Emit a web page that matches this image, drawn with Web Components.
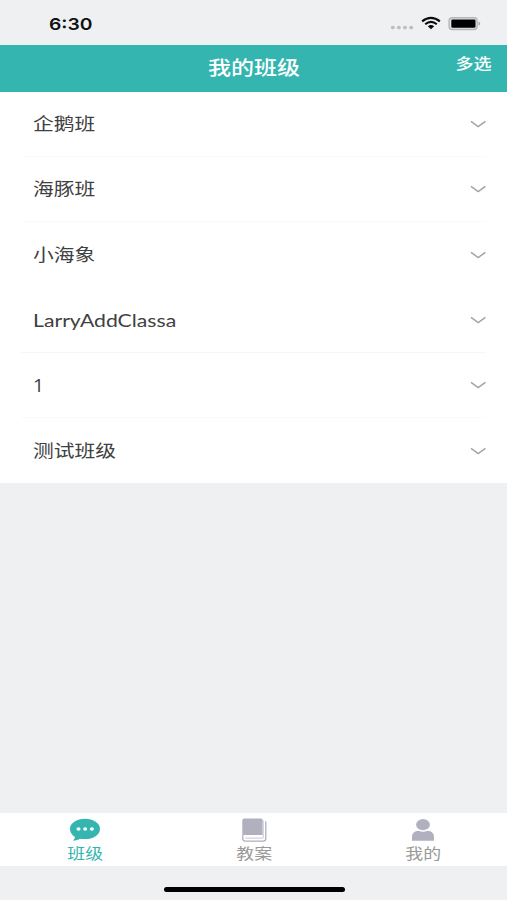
<!DOCTYPE html>
<html lang="zh-CN">
<head>
<meta charset="utf-8">
<title>我的班级</title>
<style>
  body {
    margin: 0;
    background: #eff0f2;
    font-family: Lato, "Noto Sans CJK SC", sans-serif;
  }
</style>
</head>
<body>
<class-app></class-app>
<script>
// Text drawn wider than its font, scaled from the side given by --origin
class WideText extends HTMLElement {
  constructor() {
    super();
    this.attachShadow({ mode: 'open' });
  }

  connectedCallback() {
    this.shadowRoot.innerHTML = `
      <style>
        :host {
          display: block;
          white-space: nowrap;
          transform: scaleX(var(--stretch, 1.18));
          transform-origin: var(--origin, center);
        }
      </style>
      <slot></slot>
    `;
  }
}
customElements.define('wide-text', WideText);

class StatusBar extends HTMLElement {
  constructor() {
    super();
    this.attachShadow({ mode: 'open' });
  }

  connectedCallback() {
    this.shadowRoot.innerHTML = `
      <style>
        :host {
          display: flex;
          justify-content: space-between;
          box-sizing: border-box;
          height: 44.6px;
          padding: 0 26px 0 49px;
          background: #eff0f2;
        }
        wide-text {
          --origin: left;
          --stretch: 1.17;
          margin-top: 12px;
          font: 600 16.5px/24px Inter, sans-serif;
          color: #111;
        }
        svg {
          display: block;
          margin-top: 14px;
        }
      </style>
      <wide-text>6:30</wide-text>
      <svg width="92" height="20" viewBox="0 0 92 20">
        <g fill="#bdbec0">
          <ellipse cx="3.8" cy="13.6" rx="2" ry="1.8"/>
          <ellipse cx="9.9" cy="13.6" rx="2" ry="1.8"/>
          <ellipse cx="16" cy="13.6" rx="2" ry="1.8"/>
          <ellipse cx="22.2" cy="13.6" rx="2" ry="1.8"/>
        </g>
        <g fill="none" stroke="#0c0c0c" stroke-width="2.1">
          <path d="M33.1 7.3Q42 .3 50.9 7.3"/>
          <path d="M36.200 10.200Q42 5.500 47.800 10.200"/>
        </g>
        <path d="M38.800 12.200Q42 9.800 45.200 12.200L42 15.200Z" fill="#0c0c0c"/>
        <rect x="60.1" y="3.700" width="28" height="11.800" rx="3" fill="#e4e5e7" stroke="#b5b6b8" stroke-width="1.400"/>
        <rect x="62.300" y="5.500" width="24.200" height="8.300" rx="1.200" fill="#000"/>
        <path d="M89.500 7.600Q93 9.600 89.500 11.700Z" fill="#a5a6a8"/>
      </svg>
    `;
  }
}
customElements.define('status-bar', StatusBar);

class NavHeader extends HTMLElement {
  constructor() {
    super();
    this.attachShadow({ mode: 'open' });
  }

  connectedCallback() {
    this.shadowRoot.innerHTML = `
      <style>
        :host {
          display: grid;
          grid-template-columns: 1fr auto 1fr;
          height: 47px;
          background: #34b5af;
          color: #fff;
        }
        .title {
          grid-column: 2;
          margin: 9px -1px 0 1px;
          font-size: 19.5px;
          font-weight: 500;
          line-height: 28px;
        }
        .action {
          --origin: right;
          justify-self: end;
          margin: 6.4px 15px 0 0;
          font-size: 15.3px;
          font-weight: 500;
          line-height: 24px;
        }
      </style>
      <wide-text class="title"><slot></slot></wide-text>
      <wide-text class="action"><slot name="action"></slot></wide-text>
    `;
  }
}
customElements.define('nav-header', NavHeader);

class ClassRow extends HTMLElement {
  constructor() {
    super();
    this.attachShadow({ mode: 'open' });
  }

  connectedCallback() {
    this.shadowRoot.innerHTML = `
      <style>
        :host {
          display: block;
          flex: 1;
          padding: 0 21px;
          color: #404040;
        }
        .row {
          display: flex;
          align-items: center;
          justify-content: space-between;
          box-sizing: border-box;
          height: 100%;
          padding: 1px 0 0 12px;
          border-bottom: 1px solid var(--line, #fafafa);
        }
        wide-text {
          --origin: left;
          font-size: 17.6px;
          line-height: 26px;
        }
        :host([latin]) wide-text {
          --stretch: 1.205;
          padding-top: 1px;
        }
        :host([digit]) wide-text {
          --stretch: 1.1;
          font-family: "Open Sans", sans-serif;
        }
      </style>
      <div class="row">
        <wide-text><slot></slot></wide-text>
        <svg width="16" height="10" viewBox="0 0 16 10">
          <path d="M1 2.300L8.200 7.600L15.400 2.300" fill="none" stroke="#a3a3a3" stroke-width="1.500"/>
        </svg>
      </div>
    `;
  }
}
customElements.define('class-row', ClassRow);

const tabIcons = {
  chat: `
    <path d="M16 .8C7.600 .8 1 5.200 1 10.900c0 3.400 2 6.200 5 8C5.800 20.500 5 21.600 3.600 22.500c3 .1 5.600-.5 7.300-1.800 1.600.3 3.300.4 5.100.4 8.400 0 15-4.500 15-10.200S24.400.8 16 .8z" fill="currentColor"/>
    <g fill="#fff"><ellipse cx="9.500" cy="11" rx="2" ry="1.700"/><ellipse cx="16.200" cy="11" rx="2" ry="1.700"/><ellipse cx="22.900" cy="11" rx="2" ry="1.700"/></g>`,
  book: `
    <path d="M6.200 .5H23Q24.700 .5 24.700 2.100V17H6.700Q4.300 17 4.300 19.200V2.500Q4.300 .5 6.200 .5z" fill="currentColor"/>
    <path d="M4.800 17.500V20.800Q4.800 23.100 7.300 23.100H25Q27.800 23.100 27.800 20.800V3.300" fill="none" stroke="currentColor" stroke-width="1.300"/>
    <path d="M7.300 20.200H24Q25.300 20.200 25.300 18.900V2.500" fill="none" stroke="#d2d2db" stroke-width="1.200"/>`,
  person: `
    <ellipse cx="16" cy="6.600" rx="6.900" ry="5.600" fill="currentColor"/>
    <path d="M5 22.700V18.800C5 15.200 8 13 11.500 12.800Q16 14.500 20.500 12.800C24.200 13 27 15.200 27 18.800V22.700z" fill="currentColor"/>`
};

class TabItem extends HTMLElement {
  constructor() {
    super();
    this.attachShadow({ mode: 'open' });
  }

  connectedCallback() {
    this.shadowRoot.innerHTML = `
      <style>
        :host {
          display: flex;
          flex: 1;
          flex-direction: column;
          align-items: center;
          padding-top: 5px;
          color: #b0b0bf;
        }
        :host([active]) {
          color: #34b5af;
        }
        svg {
          display: block;
        }
        wide-text {
          padding-left: 1px;
          font-size: 15.2px;
          line-height: 23px;
          color: #999;
        }
        :host([active]) wide-text {
          color: inherit;
        }
      </style>
      <svg width="32" height="24" viewBox="0 0 32 24">${tabIcons[this.getAttribute('icon')]}</svg>
      <wide-text><slot></slot></wide-text>
    `;
  }
}
customElements.define('tab-item', TabItem);

class ClassApp extends HTMLElement {
  constructor() {
    super();
    this.attachShadow({ mode: 'open' });
  }

  connectedCallback() {
    this.shadowRoot.innerHTML = `
      <style>
        :host {
          display: flex;
          flex-direction: column;
          height: 900px;
          overflow: hidden;
        }
        .list {
          display: flex;
          flex-direction: column;
          height: 391.6px;
          background: #fff;
        }
        .list :nth-child(3),
        .list :last-child {
          --line: #fff;
        }
        .list :nth-child(4) {
          --line: #f6f6f6;
        }
        .tabs {
          display: flex;
          height: 53px;
          margin-top: auto;
          background: #fff;
        }
        .home {
          display: flex;
          justify-content: center;
          height: 34px;
        }
        .home::before {
          content: "";
          width: 181px;
          height: 5px;
          margin: 21px 0 0 1px;
          border-radius: 3px;
          background: #000;
        }
      </style>
      <status-bar></status-bar>
      <nav-header>我的班级<span slot="action">多选</span></nav-header>
      <div class="list">
        <class-row>企鹅班</class-row>
        <class-row>海豚班</class-row>
        <class-row>小海象</class-row>
        <class-row latin>LarryAddClassa</class-row>
        <class-row digit>1</class-row>
        <class-row>测试班级</class-row>
      </div>
      <div class="tabs">
        <tab-item icon="chat" active>班级</tab-item>
        <tab-item icon="book">教案</tab-item>
        <tab-item icon="person">我的</tab-item>
      </div>
      <div class="home"></div>
    `;
  }
}
customElements.define('class-app', ClassApp);
</script>
</body>
</html>
